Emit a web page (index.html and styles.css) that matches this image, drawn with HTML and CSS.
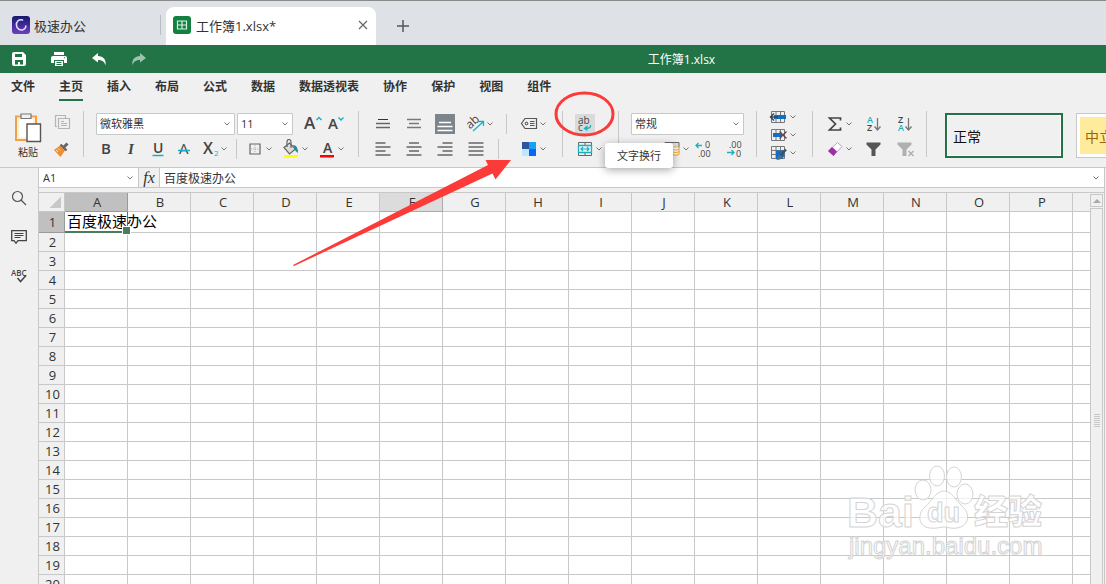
FILE: index.html
```html
<!DOCTYPE html>
<html lang="zh-CN">
<head>
    <meta charset="UTF-8">
    <meta name="viewport" content="width=device-width, initial-scale=1.0">
    <title>极速办公</title>
    <link rel="stylesheet" href="styles.css">
</head>
<body>
    <svg class="defs" aria-hidden="true">
        <symbol id="chev" viewBox="0 0 8 8"><path d="M1.500 2.500 4 5l2.500-2.500" fill="none" stroke="#777" stroke-width="1"/></symbol>
    </svg>

    <div class="app">
        <header class="tabs">
            <a class="home-tab" href="#">
                <svg width="18" height="18" viewBox="0 0 18 18">
                    <defs><linearGradient id="logo" x1="0" y1="0" x2="0" y2="1"><stop offset="0" stop-color="#14196b"/><stop offset="1" stop-color="#6f3fc0"/></linearGradient></defs>
                    <rect width="18" height="18" rx="3" fill="url(#logo)"/>
                    <path d="M10.500 4C6.500 3 4.200 6 4.400 9c.3 3.800 3.600 5.600 6.600 4.700 1.800-.6 2.700-2 2.900-3.700" fill="none" stroke="#e4dcff" stroke-width="1.600" stroke-linecap="round"/>
                </svg>
                <span>极速办公</span>
            </a>
            <a class="file-tab" href="#">
                <svg width="18" height="18" viewBox="0 0 18 18">
                    <rect width="18" height="18" rx="3" fill="#12813f"/>
                    <path d="M4.500 5h9v8h-9zM9 5v8M4.500 9h9" fill="none" stroke="#d9f0e0" stroke-width="1.200"/>
                </svg>
                <span>工作簿1.xlsx*</span>
                <svg class="close" width="10" height="10" viewBox="0 0 10 10"><path d="M1 1l8 8M9 1 1 9" stroke="#666" stroke-width="1.200"/></svg>
            </a>
            <button class="new-tab" aria-label="新建">
                <svg width="12" height="12" viewBox="0 0 12 12"><path d="M6 0v12M0 6h12" stroke="#555" stroke-width="1.500"/></svg>
            </button>
        </header>

        <div class="titlebar">
            <div class="quick">
                <button aria-label="保存"><svg width="14" height="14" viewBox="0 0 14 14"><path fill="#fff" fill-rule="evenodd" d="M2 0h9l3 3v9q0 2-2 2H2q-2 0-2-2V2q0-2 2-2zm1 2v3h7V2zm0 6v4.500h3V10h2v2.500h3V8z"/></svg></button>
                <button aria-label="打印"><svg width="16" height="14" viewBox="0 0 16 14"><path fill="#fff" fill-rule="evenodd" d="M3 0h10v3H3zM2 4h12q2 0 2 2v5h-3V8H3v3H0V6q0-2 2-2zM4 9h8v5H4zm1.500 1v1h5v-1zm0 2v1h5v-1zM13 5.300v1h1v-1z"/></svg></button>
                <button aria-label="撤销"><svg width="16" height="14" viewBox="0 0 16 14"><path fill="#fff" d="M7 1 1 6l6 4.500V8c4 0 6.500 1.500 7.500 5.500C15.500 7.500 12 4 7 4z"/></svg></button>
                <button aria-label="恢复"><svg width="16" height="14" viewBox="0 0 16 14"><path fill="#9cc3ab" d="M9 1l6 5-6 4.500V8C5 8 2.500 9.500 1.500 13.500.5 7.500 4 4 9 4z"/></svg></button>
            </div>
            <div class="doc-name">工作簿1.xlsx</div>
        </div>

        <nav class="menu">
            <a href="#">文件</a>
            <a href="#" class="active">主页</a>
            <a href="#">插入</a>
            <a href="#">布局</a>
            <a href="#">公式</a>
            <a href="#">数据</a>
            <a href="#">数据透视表</a>
            <a href="#">协作</a>
            <a href="#">保护</a>
            <a href="#">视图</a>
            <a href="#">组件</a>
        </nav>

        <div class="toolbar">
            <div class="group clip">
                <button class="paste">
                    <svg width="28" height="30" viewBox="0 0 28 30">
                        <path d="M2 3.500h20V27H2z" fill="#fff" stroke="#f0a04b" stroke-width="2"/>
                        <path d="M4 5h16v20H4z" fill="none" stroke="#ffe3a8"/>
                        <path d="M7 1h10v4.500H7z" fill="#f0f0f0" stroke="#777" stroke-width="1.200"/>
                        <path d="M13 11h13.500v17.500H13z" fill="#fff" stroke="#555" stroke-width="1.400"/>
                    </svg>
                    <span>粘贴</span>
                </button>
                <div class="rows">
                    <div class="row">
                        <button class="btn" aria-label="复制"><svg viewBox="0 0 20 20"><path d="M5 12.500H3.500v-11h10V4M6.500 4.500h11v10h-11zM9 7.500h3M9 9.500h6M9 11.500h6" fill="none" stroke="#b5b5b5" stroke-width="1.200"/></svg></button>
                    </div>
                    <div class="row">
                        <button class="btn" aria-label="格式刷"><svg viewBox="0 0 20 20"><path d="M2 11l6-4.500 5 5L8.500 18z" fill="#ef8d2f"/><path d="M4 11l2 2M6 9.500l2 2" stroke="#ffe9d0"/><path d="M8.500 5.500l6 6" stroke="#666" stroke-width="2.400"/><path d="M12 8l3.500-3.500" stroke="#666" stroke-width="3"/></svg></button>
                    </div>
                </div>
            </div>
            <div class="sep"></div>

            <div class="group font">
                <div class="rows">
                    <div class="row">
                        <div class="combo font-name"><select aria-label="字体"><option>微软雅黑</option></select><svg><use href="#chev"/></svg></div>
                        <div class="combo font-size"><select aria-label="字号"><option>11</option></select><svg><use href="#chev"/></svg></div>
                        <div class="sizers">
                            <button class="btn" aria-label="增大字号"><svg viewBox="0 0 20 20"><text x="1" y="15" class="t17 semi">A</text><path d="M13.500 6 16 3.500 18.500 6" fill="none" stroke="#1ab0c0" stroke-width="1.400"/></svg></button>
                            <button class="btn" aria-label="减小字号"><svg viewBox="0 0 20 20"><text x="1" y="15" class="t15 semi">A</text><path d="M11.500 3.500 14 6l2.500-2.500" fill="none" stroke="#1ab0c0" stroke-width="1.400"/></svg></button>
                        </div>
                    </div>
                    <div class="row styles">
                        <button class="btn" aria-label="加粗"><svg viewBox="0 0 20 20"><text x="5" y="15" class="t15 semi">B</text></svg></button>
                        <button class="btn" aria-label="倾斜"><svg viewBox="0 0 20 20"><text x="6" y="15" class="t15 serif">I</text></svg></button>
                        <button class="btn" aria-label="下划线"><svg viewBox="0 0 20 20"><text x="5" y="14" class="t14 semi">U</text><path d="M4.500 16.500h11" stroke="#1ab0c0" stroke-width="1.500"/></svg></button>
                        <button class="btn" aria-label="删除线"><svg viewBox="0 0 20 20"><text x="5" y="15" class="t15">A</text><path d="M4 11.500h12" stroke="#1ab0c0" stroke-width="1.500"/></svg></button>
                        <button class="btn drop" aria-label="下标"><svg viewBox="0 0 20 20"><text x="3" y="15" class="t16 semi">X</text><text x="14" y="17" class="t8 teal">2</text></svg><svg class="chev"><use href="#chev"/></svg></button>
                        <span class="vline"></span>
                        <button class="btn drop" aria-label="边框"><svg viewBox="0 0 20 20"><path d="M5 5h10v10H5z" fill="none" stroke="#666" stroke-width="1.200"/><path d="M10 6v8M6 10h8" stroke="#aaa" stroke-dasharray="1 1"/></svg><svg class="chev"><use href="#chev"/></svg></button>
                        <button class="btn drop" aria-label="填充颜色"><svg viewBox="0 0 20 20"><path d="M3 8.500 8.500 4l6 6-6 5z" fill="#ddd" stroke="#666" stroke-width="1.200"/><path d="M6 8V3q0-2.500 2-2.500T10 3v6" fill="none" stroke="#666" stroke-width="1.200"/><path d="M12 6q5 0 5 8l-2.500-2z" fill="#238b9c"/><path d="M3 16h14v2.500H3z" fill="#ff0"/></svg><svg class="chev"><use href="#chev"/></svg></button>
                        <button class="btn drop" aria-label="字体颜色"><svg viewBox="0 0 20 20"><text x="6" y="14" class="t14 semi">A</text><path d="M3 16h14v2.500H3z" fill="red"/></svg><svg class="chev"><use href="#chev"/></svg></button>
                    </div>
                </div>
            </div>
            <div class="sep"></div>

            <div class="group align">
                <div class="rows">
                    <div class="row">
                        <button class="btn" aria-label="顶端对齐"><svg viewBox="0 0 20 20"><path d="M5 5.500h10" stroke="#333"/><path d="M3 9.500h14M3 13.500h14" stroke="#666" stroke-width="1.400"/></svg></button>
                        <button class="btn" aria-label="垂直居中"><svg viewBox="0 0 20 20"><path d="M3 5.500h14M5 9.500h10M3 13.500h14" stroke="#777" stroke-width="1.400"/></svg></button>
                        <button class="btn pressed" aria-label="底端对齐"><svg viewBox="0 0 20 20"><path d="M4 8.500h12M2.500 12.500h15M2.500 16.500h15" stroke="#fff" stroke-width="1.300"/></svg></button>
                        <button class="btn drop" aria-label="方向"><svg viewBox="0 0 20 20"><text x="1" y="12" class="t12" transform="rotate(-42 7 10)">ab</text><path d="M7 17l10-9M12.500 7.500h5V12" fill="none" stroke="#1ab0c0" stroke-width="1.300"/></svg><svg class="chev"><use href="#chev"/></svg></button>
                        <span class="vline"></span>
                        <button class="btn drop" aria-label="命名区域"><svg viewBox="0 0 20 20"><path d="M2.500 9.500 6 4.500h11.500v10H6z" fill="none" stroke="#555" stroke-width="1.200"/><circle cx="7.500" cy="9.500" r="1.300" fill="none" stroke="#333"/><path d="M11 7.500h4.500M11 9.500h4.500M11 11.500h4.500" stroke="#555"/></svg><svg class="chev"><use href="#chev"/></svg></button>
                    </div>
                    <div class="row">
                        <button class="btn" aria-label="左对齐"><svg viewBox="0 0 20 20"><path d="M2.500 4h10M2.500 8h15M2.500 12h10M2.500 16h15" stroke="#666" stroke-width="1.500"/></svg></button>
                        <button class="btn" aria-label="居中"><svg viewBox="0 0 20 20"><path d="M5 4h10M2.500 8h15M5 12h10M2.500 16h15" stroke="#666" stroke-width="1.500"/></svg></button>
                        <button class="btn" aria-label="右对齐"><svg viewBox="0 0 20 20"><path d="M7.500 4h10M2.500 8h15M7.500 12h10M2.500 16h15" stroke="#666" stroke-width="1.500"/></svg></button>
                        <button class="btn" aria-label="两端对齐"><svg viewBox="0 0 20 20"><path d="M2.500 4h15M2.500 8h15M2.500 12h15M2.500 16h15" stroke="#666" stroke-width="1.500"/></svg></button>
                        <span class="vline"></span>
                        <button class="btn drop last" aria-label="配色方案"><svg viewBox="0 0 20 20"><path d="M3 3h7v7H3z" fill="#2b579a"/><path d="M10 3h7v7h-7z" fill="#18a0f5"/><path d="M3 10h7v7H3z" fill="#bfe6ff"/><path d="M10 10h7v7h-7z" fill="#0a64f5"/></svg><svg class="chev"><use href="#chev"/></svg></button>
                    </div>
                </div>
            </div>
            <div class="sep"></div>

            <div class="group">
                <div class="rows">
                    <div class="row">
                        <button class="btn hover" aria-label="文字换行"><svg viewBox="0 0 20 20"><text x="3" y="10" class="t10">ab</text><text x="3" y="17" class="t10">c</text><path d="M15.500 11q1 3.500-5.500 3.500M12.500 12 9.500 14.500l3 2" fill="none" stroke="#1ab0c0" stroke-width="1.300"/></svg></button>
                    </div>
                    <div class="row">
                        <button class="btn drop" aria-label="合并单元格"><svg viewBox="0 0 20 20"><path d="M3.500 3.500h13v13h-13zM10 4v3M10 14v3" fill="none" stroke="#666"/><path d="M3.500 6.500h13v7h-13z" fill="#e7f9fb" stroke="#1ab0c0" stroke-width="1.300"/><path d="M6 10h8M8 8l-2 2 2 2M12 8l2 2-2 2" fill="none" stroke="#1ab0c0" stroke-width="1.200"/></svg><svg class="chev"><use href="#chev"/></svg></button>
                    </div>
                </div>
            </div>
            <div class="sep"></div>

            <div class="group numbers">
                <div class="rows">
                    <div class="row">
                        <div class="combo number"><select aria-label="数字格式"><option>常规</option></select><svg><use href="#chev"/></svg></div>
                    </div>
                    <div class="row formats">
                        <button class="btn" aria-label="百分比"><svg viewBox="0 0 20 20"><text x="4" y="15" class="t15">%</text></svg></button>
                        <button class="btn drop" aria-label="货币"><svg viewBox="0 0 20 20"><path d="M3 3.500h14v5H3z" fill="#ddd" stroke="#666"/><path d="M10 8v7q4 2.500 7 0V8z" fill="#fff" stroke="#f0b040" stroke-width="1.200"/><path d="M10 10q4 2 7 0M10 12.500q4 2 7 0" fill="none" stroke="#f0b040" stroke-width="1.200"/></svg><svg class="chev"><use href="#chev"/></svg></button>
                        <button class="btn" aria-label="减少小数"><svg viewBox="0 0 20 20"><path d="M9 6.500H3M5.500 4 3 6.500 5.500 9" fill="none" stroke="#1ab0c0" stroke-width="1.300"/><text x="12" y="9" class="t9">0</text><text x="5" y="18" class="t9">.00</text></svg></button>
                        <button class="btn" aria-label="增加小数"><svg viewBox="0 0 20 20"><path d="M3 13.500h7M7.500 11 10 13.500 7.500 16" fill="none" stroke="#1ab0c0" stroke-width="1.300"/><text x="5" y="9" class="t9">.00</text><text x="12" y="18" class="t9">0</text></svg></button>
                    </div>
                </div>
            </div>
            <div class="sep"></div>

            <div class="group cells">
                <button class="btn drop" aria-label="插入单元格"><svg viewBox="0 0 20 16"><path d="M2.500 2.500h13v11h-13zM7 2v12M11.500 2v12" fill="none" stroke="#777"/><path d="M5 6h12v4H5z" fill="#0f6fc6"/><path d="M1.500 8H9M5 4.500 1.500 8 5 11.500" fill="none" stroke="#3b4650" stroke-width="1.500"/></svg><svg class="chev"><use href="#chev"/></svg></button>
                <button class="btn drop" aria-label="删除单元格"><svg viewBox="0 0 20 16"><path d="M2.500 2.500h13v11h-13zM7 2v12M11.500 2v12" fill="none" stroke="#777"/><path d="M4 6h9v4H4z" fill="#0f6fc6"/><path d="M10.500 4.500l7 7M17.500 4.500l-7 7" stroke="#6b4545" stroke-width="1.400"/></svg><svg class="chev"><use href="#chev"/></svg></button>
                <button class="btn drop" aria-label="单元格格式"><svg viewBox="0 0 20 16"><path d="M2.500 1.500h13v12h-13zM2.500 5.500h13M2.500 9.500h13M7 1v13M11.500 1v13" fill="none" stroke="#777"/><path d="M7 5.500h8.500V11L13 14H7z" fill="#0f6fc6"/><path d="M17 4.500 11 11" stroke="#44525c" stroke-width="2.500"/><path d="M11.500 10q-3 0-4 5 5 0 5.500-3.500z" fill="#4f6f8a"/></svg><svg class="chev"><use href="#chev"/></svg></button>
            </div>
            <div class="sep"></div>

            <div class="group edit">
                <div class="rows">
                    <div class="row">
                        <button class="btn drop" aria-label="求和"><svg viewBox="0 0 20 20"><path d="M15.500 6.500V4H4.500l6 6-6 6h11v-2.500" fill="none" stroke="#444" stroke-width="1.700"/></svg><svg class="chev"><use href="#chev"/></svg></button>
                        <button class="btn" aria-label="升序"><svg viewBox="0 0 20 20"><text x="3" y="9" class="t9 semi teal">A</text><text x="3" y="17" class="t9 semi">Z</text><path d="M13.500 4v12M10.500 12.500l3 3.500 3-3.500" fill="none" stroke="#777" stroke-width="1.300"/></svg></button>
                        <button class="btn" aria-label="降序"><svg viewBox="0 0 20 20"><text x="3" y="9" class="t9 semi">Z</text><text x="3" y="17" class="t9 semi teal">A</text><path d="M13.500 4v12M10.500 12.500l3 3.500 3-3.500" fill="none" stroke="#777" stroke-width="1.300"/></svg></button>
                    </div>
                    <div class="row">
                        <button class="btn drop" aria-label="清除"><svg viewBox="0 0 20 20"><path d="M3.500 12 12.500 3.500l4.500 4-8.500 9z" fill="#fff" stroke="#d58fdc"/><path d="M3 12l4-4 5 4.500L8.500 17z" fill="#9b2fa6"/></svg><svg class="chev"><use href="#chev"/></svg></button>
                        <button class="btn" aria-label="筛选"><svg viewBox="0 0 20 20"><path d="M2.500 3.500h14v2l-5 5V17h-4v-6.500l-5-5z" fill="#555"/></svg></button>
                        <button class="btn" aria-label="清除筛选"><svg viewBox="0 0 20 20"><path d="M2.500 3.500h14v2l-5 5V17h-4v-6.500l-5-5z" fill="#b0b0b0"/><path d="M13.500 12l5 5M18.500 12l-5 5" stroke="#b0b0b0" stroke-width="1.500"/></svg></button>
                    </div>
                </div>
            </div>
            <div class="sep"></div>

            <div class="cell-styles">
                <button class="cell-style selected">正常</button>
                <button class="cell-style neutral">中立</button>
            </div>
        </div>

        <div class="workspace">
            <aside class="side">
                <button aria-label="查找"><svg width="16" height="16" viewBox="0 0 16 16"><circle cx="6.500" cy="6.500" r="5" fill="none" stroke="#555" stroke-width="1.200"/><path d="M10 10l5 5" stroke="#555" stroke-width="1.300"/></svg></button>
                <button aria-label="批注"><svg width="16" height="16" viewBox="0 0 16 16"><path d="M.7 1.700h14.600v10H7l-2 2.500-2-2.500H.7z" fill="none" stroke="#444" stroke-width="1.300"/><path d="M3.500 4.500h9M3.500 6.500h9M3.500 8.500h6" stroke="#444"/></svg></button>
                <button aria-label="拼写检查"><svg width="16" height="16" viewBox="0 0 16 16"><text x="0" y="8" class="t8 semi">ABC</text><path d="M6.500 10l3 3.500L15 7.500" fill="none" stroke="#444" stroke-width="1.500"/></svg></button>
            </aside>

            <main class="sheet">
                <div class="formula-bar">
                    <div class="name-box"><input aria-label="名称框" value="A1"><svg><use href="#chev"/></svg></div>
                    <button class="fx"><i>fx</i></button>
                    <div class="formula"><input aria-label="编辑栏" value="百度极速办公"><svg><use href="#chev"/></svg></div>
                </div>
                <div class="grid-area">
                    <div class="grid-wrap">
                        <table class="grid" id="grid"></table>
                    </div>
                    <div class="scrollbar">
                        <button aria-label="向上滚动"><svg width="8" height="5" viewBox="0 0 8 5"><path d="M0 5 4 1l4 4z" fill="#aaa"/></svg></button>
                        <div class="thumb"><span></span></div>
                    </div>
                </div>
            </main>
        </div>

        <div class="tooltip">文字换行</div>

        <svg class="marks" width="1106" height="584" viewBox="0 0 1106 584">
            <g class="watermark">
                <text x="847" y="527" class="wm-latin">Bai</text>
                <ellipse cx="923" cy="490" rx="8" ry="10"/>
                <ellipse cx="937" cy="476" rx="7.500" ry="10"/>
                <ellipse cx="954" cy="477" rx="7.500" ry="10"/>
                <ellipse cx="965" cy="494" rx="8" ry="10"/>
                <path d="M944 491c8 0 12 10 18 15 9 8 7 20-5 22-6 1-9-1-13-1s-8 2-14 1c-12-1-13-14-5-21 7-6 11-16 19-16z"/>
                <text x="927" y="522" class="wm-du">du</text>
                <text x="974" y="524" class="wm-cjk">经验</text>
                <text x="849" y="554" class="wm-url">jingyan.baidu.com</text>
            </g>
            <ellipse cx="584.500" cy="114" rx="28.500" ry="21" fill="none" stroke="#fc3a38" stroke-width="3"/>
            <path d="M293 265 488 165l-2.500-5H511l-15.500 19.500-3-6L294 266z" fill="#fc3a38"/>
        </svg>
    </div>

    <script>
        const grid = document.getElementById('grid');
        // the last column has no name and takes the width that is left
        const columns = [...'ABCDEFGHIJKLMNOP', ''];
        const values = { A1: '百度极速办公' };

        let html = '<colgroup><col class="col-head">' + '<col class="col">'.repeat(columns.length - 1) + '<col></colgroup>';
        html += '<thead><tr><th class="corner"></th>';
        columns.forEach(name => {
            const state = name === 'A' ? 'selected' : name === 'F' ? 'hover' : '';
            html += `<th class="${state}">${name}</th>`;
        });
        html += '</tr></thead><tbody>';

        for (let r = 1; r <= 20; r++) {
            html += `<tr${r === 1 ? ' class="first"' : ''}><th class="${r === 1 ? 'selected' : ''}">${r}</th>`;
            columns.forEach(name => {
                const id = name + r;
                html += `<td${id === 'A1' ? ' class="current"' : ''}>${values[id] || ''}</td>`;
            });
            html += '</tr>';
        }
        grid.innerHTML = html + '</tbody>';
    </script>
</body>
</html>
```

FILE: styles.css
```css
* {
    box-sizing: border-box;
}
body {
    margin: 0;
    font-family: "Open Sans", "Noto Sans CJK SC", sans-serif;
    font-size: 12px;
    color: #333;
    background: #f0f0f0;
    overflow: hidden;
}
button {
    padding: 0;
    border: none;
    background: none;
    font: inherit;
    color: inherit;
}
a {
    color: inherit;
    text-decoration: none;
}
svg {
    display: block;
    flex: none;
}
.defs {
    position: absolute;
    width: 0;
    height: 0;
}
.app {
    position: relative;
    display: flex;
    flex-direction: column;
    height: 100vh;
    overflow: hidden;
}

/* window tabs */
.tabs {
    display: flex;
    flex: none;
    height: 45px;
    padding: 6px 0 0 12px;
    background: #dee1e6;
    border-top: 1px solid #8a8a8a;
    font-size: 13px;
}
.home-tab {
    display: flex;
    align-items: center;
    gap: 4px;
    width: 149px;
    height: 20px;
    margin: 8px 5px 0 0;
    border-right: 1px solid #b9bcc1;
}
.file-tab {
    display: flex;
    align-items: center;
    gap: 5px;
    width: 210px;
    padding: 0 8px 2px 7px;
    background: #fff;
    border-radius: 8px 8px 0 0;
}
.file-tab .close {
    margin-left: auto;
}
.new-tab {
    padding: 0 21px;
}

.titlebar {
    display: flex;
    align-items: center;
    flex: none;
    height: 28px;
    background: #227447;
    color: #fff;
}
.quick {
    display: flex;
    flex: none;
    gap: 20px;
    width: 257px;
    padding-left: 9px;
}
.quick button {
    display: flex;
    justify-content: center;
    width: 20px;
}
.doc-name {
    flex: 1;
    text-align: center;
}

/* ribbon */
.menu {
    display: flex;
    flex: none;
    gap: 24px;
    height: 28px;
    padding-left: 11px;
    font-weight: bold;
    line-height: 28px;
}
.menu a.active {
    border-bottom: 2px solid #227447;
    height: 28px;
}
.toolbar {
    display: flex;
    align-items: flex-start;
    flex: none;
    padding: 12px 0 6px 2px;
    border-bottom: 1px solid #c8c8c8;
    overflow: hidden;
}
.group {
    display: flex;
    flex: none;
    padding: 0 15px 0 12px;
}
.sep {
    flex: none;
    width: 1px;
    height: 46px;
    margin-top: -2px;
    background: #c8c8c8;
}
.rows {
    display: flex;
    flex-direction: column;
    gap: 5px;
}
.row {
    display: flex;
    align-items: center;
    height: 21px;
}
.row + .row {
    height: 20px;
}
.btn {
    display: flex;
    flex: none;
    align-items: center;
}
.btn svg {
    width: 20px;
    height: 20px;
}
.btn .chev {
    width: 8px;
    height: 8px;
}
.vline {
    width: 1px;
    height: 20px;
    background: #c8c8c8;
}

/* letters inside icons */
svg text {
    font-family: "Open Sans", sans-serif;
    fill: #444;
}
.t8 {
    font-size: 8px;
}
.t9 {
    font-size: 9px;
}
.t10 {
    font-size: 10px;
}
.t12 {
    font-size: 12px;
}
.t14 {
    font-size: 14px;
}
.t15 {
    font-size: 15px;
}
.t16 {
    font-size: 16px;
}
.t17 {
    font-size: 17px;
}
.semi {
    font-weight: 600;
}
svg .teal {
    fill: #1ab0c0;
}
svg .serif {
    font-family: "Liberation Serif", serif;
    font-style: italic;
    font-weight: bold;
}

.combo {
    position: relative;
    display: flex;
    align-items: center;
    height: 22px;
    background: #fff;
    border: 1px solid #c8c8c8;
    border-radius: 1px;
}
.combo select {
    width: 100%;
    height: 20px;
    padding: 0 3px;
    border: none;
    background: none;
    appearance: none;
    font: inherit;
    font-size: 11px;
    color: #333;
}
.combo svg {
    position: absolute;
    right: 3px;
    width: 8px;
    height: 8px;
    pointer-events: none;
}
.clip {
    gap: 10px;
    padding-right: 11px;
}
.paste {
    display: flex;
    flex-direction: column;
    align-items: center;
    gap: 1px;
    font-size: 10px;
    line-height: 16px;
}
.font {
    padding-right: 11px;
}
.font-name {
    width: 139px;
}
.font-size {
    width: 56px;
    margin: 0 10px 0 2px;
}
.sizers {
    display: flex;
    gap: 4px;
}
.styles {
    gap: 6px;
}
.styles .drop + .drop {
    margin-left: 2px;
}
.styles .vline {
    margin: 0 2px;
}
.align {
    padding-left: 14px;
}
.align .row {
    gap: 11px;
}
.align .vline {
    margin: 0 1px;
}
.align .last {
    margin-left: auto;
}
.pressed {
    background: #7d858c;
}
.hover {
    background: #d8dadc;
}
.numbers {
    padding-right: 12px;
}
.number {
    width: 113px;
}
.formats {
    gap: 11px;
}
.formats .drop {
    margin-right: -8px;
}
.cells {
    flex-direction: column;
    gap: 2px;
    margin-top: -4px;
}
.cells .btn svg:first-child {
    height: 16px;
}
.edit {
    padding-right: 11px;
}
.edit .row {
    gap: 11px;
}
.cell-styles {
    display: flex;
    flex: 1;
    gap: 13px;
    min-width: 0;
    padding-left: 18px;
    overflow: hidden;
}
.cell-style {
    flex: none;
    width: 118px;
    height: 45px;
    padding: 0 6px;
    border: 2px solid #227447;
    box-shadow: inset 0 0 0 1px #fff;
    font-size: 14px;
    color: #111;
    text-align: left;
}
.cell-style.neutral {
    border: 1px solid #c8c8c8;
    padding: 0 8px;
    background: #ffeb9c;
    box-shadow: inset 0 0 0 3px #fff;
    color: #9c6500;
}

/* sheet */
.workspace {
    display: flex;
    flex: 1;
    min-height: 0;
}
.side {
    display: flex;
    flex: none;
    flex-direction: column;
    align-items: center;
    gap: 23px;
    width: 39px;
    padding-top: 22px;
    border-right: 1px solid #c8c8c8;
}
.sheet {
    display: flex;
    flex: 1;
    flex-direction: column;
    min-width: 0;
    margin-right: 1px;
    border-right: 1px solid #c8c8c8;
}
.formula-bar {
    display: flex;
    flex: none;
    height: 20px;
    background: #fff;
    border-bottom: 1px solid #c8c8c8;
}
.formula-bar input {
    width: 100%;
    min-width: 0;
    padding: 0 4px;
    border: none;
    background: none;
    font: inherit;
    color: #333;
}
.name-box,
.formula {
    display: flex;
    align-items: center;
}
.name-box {
    width: 99px;
    font-size: 11px;
}
.name-box svg,
.formula svg {
    width: 8px;
    height: 8px;
    margin-right: 4px;
}
.fx {
    width: 22px;
    background: #f0f0f0;
    border: solid #c8c8c8;
    border-width: 0 1px;
    font-family: "Liberation Serif", serif;
    font-size: 16px;
    line-height: 16px;
}
.formula {
    flex: 1;
}
.grid-area {
    display: flex;
    flex: 1;
    min-height: 0;
    margin-top: 4px;
    border-top: 1px solid #c8c8c8;
}
.grid-wrap {
    flex: 1;
    min-width: 0;
    overflow: hidden;
    background: #fff;
}
.grid {
    table-layout: fixed;
    width: 100%;
    border-collapse: separate;
    border-spacing: 0;
}
.col-head {
    width: 26px;
}
.col {
    width: 63px;
}
.grid th,
.grid td {
    height: 19px;
    padding: 0;
    border: solid #c8c8c8;
    border-width: 0 1px 1px 0;
    line-height: 18px;
}
.grid tr :last-child {
    border-right: none;
}
.grid th {
    padding-left: 2px;
    background: #f0f0f0;
    font-size: 13px;
    font-weight: normal;
}
.grid .first th,
.grid .first td {
    height: 21px;
    line-height: 19px;
}
.grid th.selected {
    background: #c0c0c0;
    border-color: #999;
}
.grid th.hover {
    background: #dcdcdc;
    border-color: #aaa;
}
.grid .corner {
    background: linear-gradient(135deg, transparent 50%, #c8c8c8 50%) no-repeat 11px 4px / 11px 11px #f0f0f0;
}
.grid td.current {
    position: relative;
    padding-left: 2px;
    border-right-color: #4a7d5c;
    border-bottom: 2px solid #4a7d5c;
    font-size: 15px;
    color: #000;
    white-space: nowrap;
}
/* fill handle */
.grid td.current::after {
    content: "";
    position: absolute;
    right: -4px;
    bottom: -4px;
    width: 7px;
    height: 7px;
    background: #4a7d5c;
    border: 1px solid #fff;
}
.scrollbar {
    display: flex;
    flex: none;
    flex-direction: column;
    gap: 1px;
    width: 14px;
    padding: 1px 1px 0 0;
}
.scrollbar button {
    display: flex;
    align-items: center;
    justify-content: center;
    height: 13px;
    border: 1px solid #c8c8c8;
}
.thumb {
    display: flex;
    flex: 1;
    align-items: center;
    justify-content: center;
    border: 1px solid #c8c8c8;
    border-bottom: none;
}
.thumb span {
    width: 6px;
    height: 14px;
    margin-top: 48px;
    background: repeating-linear-gradient(#c8c8c8 0 1px, transparent 1px 2px);
}

.tooltip {
    position: absolute;
    left: 605px;
    top: 143px;
    padding: 4px 12px;
    background: #fff;
    border-radius: 3px;
    box-shadow: 0 2px 8px rgba(0, 0, 0, 0.35);
    font-size: 11px;
    line-height: 17px;
}
.marks {
    position: absolute;
    left: 0;
    top: 0;
    pointer-events: none;
}
.watermark,
.watermark text {
    fill: rgba(255, 255, 255, 0.7);
    stroke: #d4d4d4;
    stroke-width: 1px;
}
.watermark .wm-latin {
    font: bold 43px "Liberation Sans", sans-serif;
}
.watermark .wm-du {
    font: bold 27px "Liberation Sans", sans-serif;
}
.watermark .wm-cjk {
    font: 900 34px "Noto Sans CJK SC", sans-serif;
}
.watermark .wm-url {
    font: 24px "Liberation Sans", sans-serif;
}
```
